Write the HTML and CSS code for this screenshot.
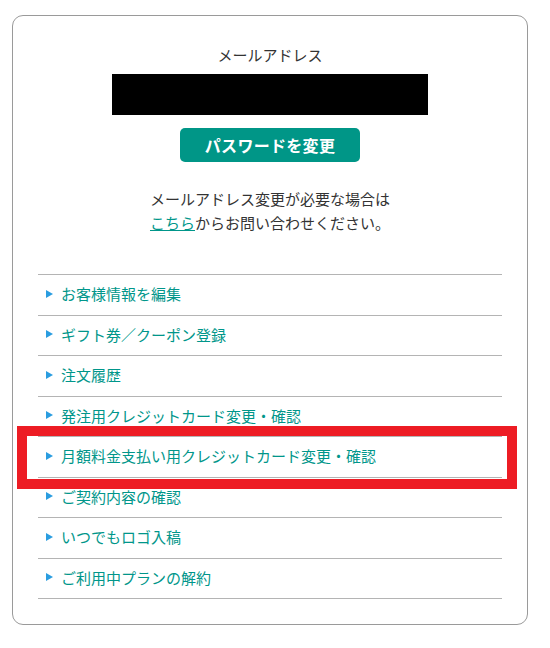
FILE: index.html
```html
<!DOCTYPE html>
<html lang="ja">
<head>
<meta charset="utf-8">
<title>マイページ</title>
<link rel="stylesheet" href="styles.css">
</head>
<body>
<div class="card">
  <div class="label">メールアドレス</div>
  <div class="masked"></div>
  <button class="btn" type="button">パスワードを変更</button>
  <p class="note">メールアドレス変更が必要な場合は<br><a href="#" class="link">こちら</a>からお問い合わせください。</p>
  <ul class="menu">
    <li class="item"><a href="#">お客様情報を編集</a></li>
    <li class="item"><a href="#">ギフト券／クーポン登録</a></li>
    <li class="item"><a href="#">注文履歴</a></li>
    <li class="item"><a href="#">発注用クレジットカード変更・確認</a></li>
    <li class="item highlighted"><a href="#">月額料金支払い用クレジットカード変更・確認</a><span class="mark"></span></li>
    <li class="item"><a href="#">ご契約内容の確認</a></li>
    <li class="item"><a href="#">いつでもロゴ入稿</a></li>
    <li class="item"><a href="#">ご利用中プランの解約</a></li>
  </ul>
</div>
</body>
</html>
```
FILE: styles.css
```css
html, body {
  margin: 0;
  padding: 0;
  background: #fff;
}
body {
  font-family: "Noto Sans CJK JP", "Noto Sans", sans-serif;
  color: #333;
  font-size: 15px;
}
.card {
  box-sizing: border-box;
  margin: 15px 0 0 12px;
  width: 516px;
  height: 610px;
  border: 1px solid #9a9a9a;
  border-radius: 11px;
  padding: 27px 25px 25px;
  display: flex;
  flex-direction: column;
  align-items: center;
}
.label {
  font-size: 15px;
  line-height: 24px;
  color: #333;
}
.masked {
  margin-top: 7px;
  width: 316px;
  height: 41px;
  background: #000;
}
.btn {
  margin-top: 13px;
  width: 180px;
  height: 34px;
  border: none;
  border-radius: 5px;
  background: #009687;
  color: #fff;
  font-family: inherit;
  font-size: 16px;
  font-weight: bold;
  padding: 0;
  line-height: 34px;
  letter-spacing: 0.3px;
}
.note {
  margin: 25px 0 0;
  text-align: center;
  font-size: 15px;
  line-height: 24px;
  color: #333;
}
.link {
  color: #00968a;
  text-decoration: underline;
}
.menu {
  list-style: none;
  margin: 39px 0 0;
  padding: 0;
  width: 464px;
  border-top: 1px solid #b4b4b4;
}
.item {
  position: relative;
  border-bottom: 1px solid #b4b4b4;
  padding: 7px 0 9px 8px;
  line-height: 23.5px;
}
.item a {
  display: flex;
  align-items: center;
  gap: 8px;
  color: #00968a;
  text-decoration: none;
  font-size: 15px;
}
.item a::before {
  content: "";
  width: 0;
  height: 0;
  border-top: 4.5px solid transparent;
  border-bottom: 4.5px solid transparent;
  border-left: 7px solid #2a9de0;
  flex: none;
}
.mark {
  position: absolute;
  top: -11px;
  left: -21px;
  right: -15px;
  bottom: -12px;
  border: 10px solid #ed1c24;
  pointer-events: none;
}
```
